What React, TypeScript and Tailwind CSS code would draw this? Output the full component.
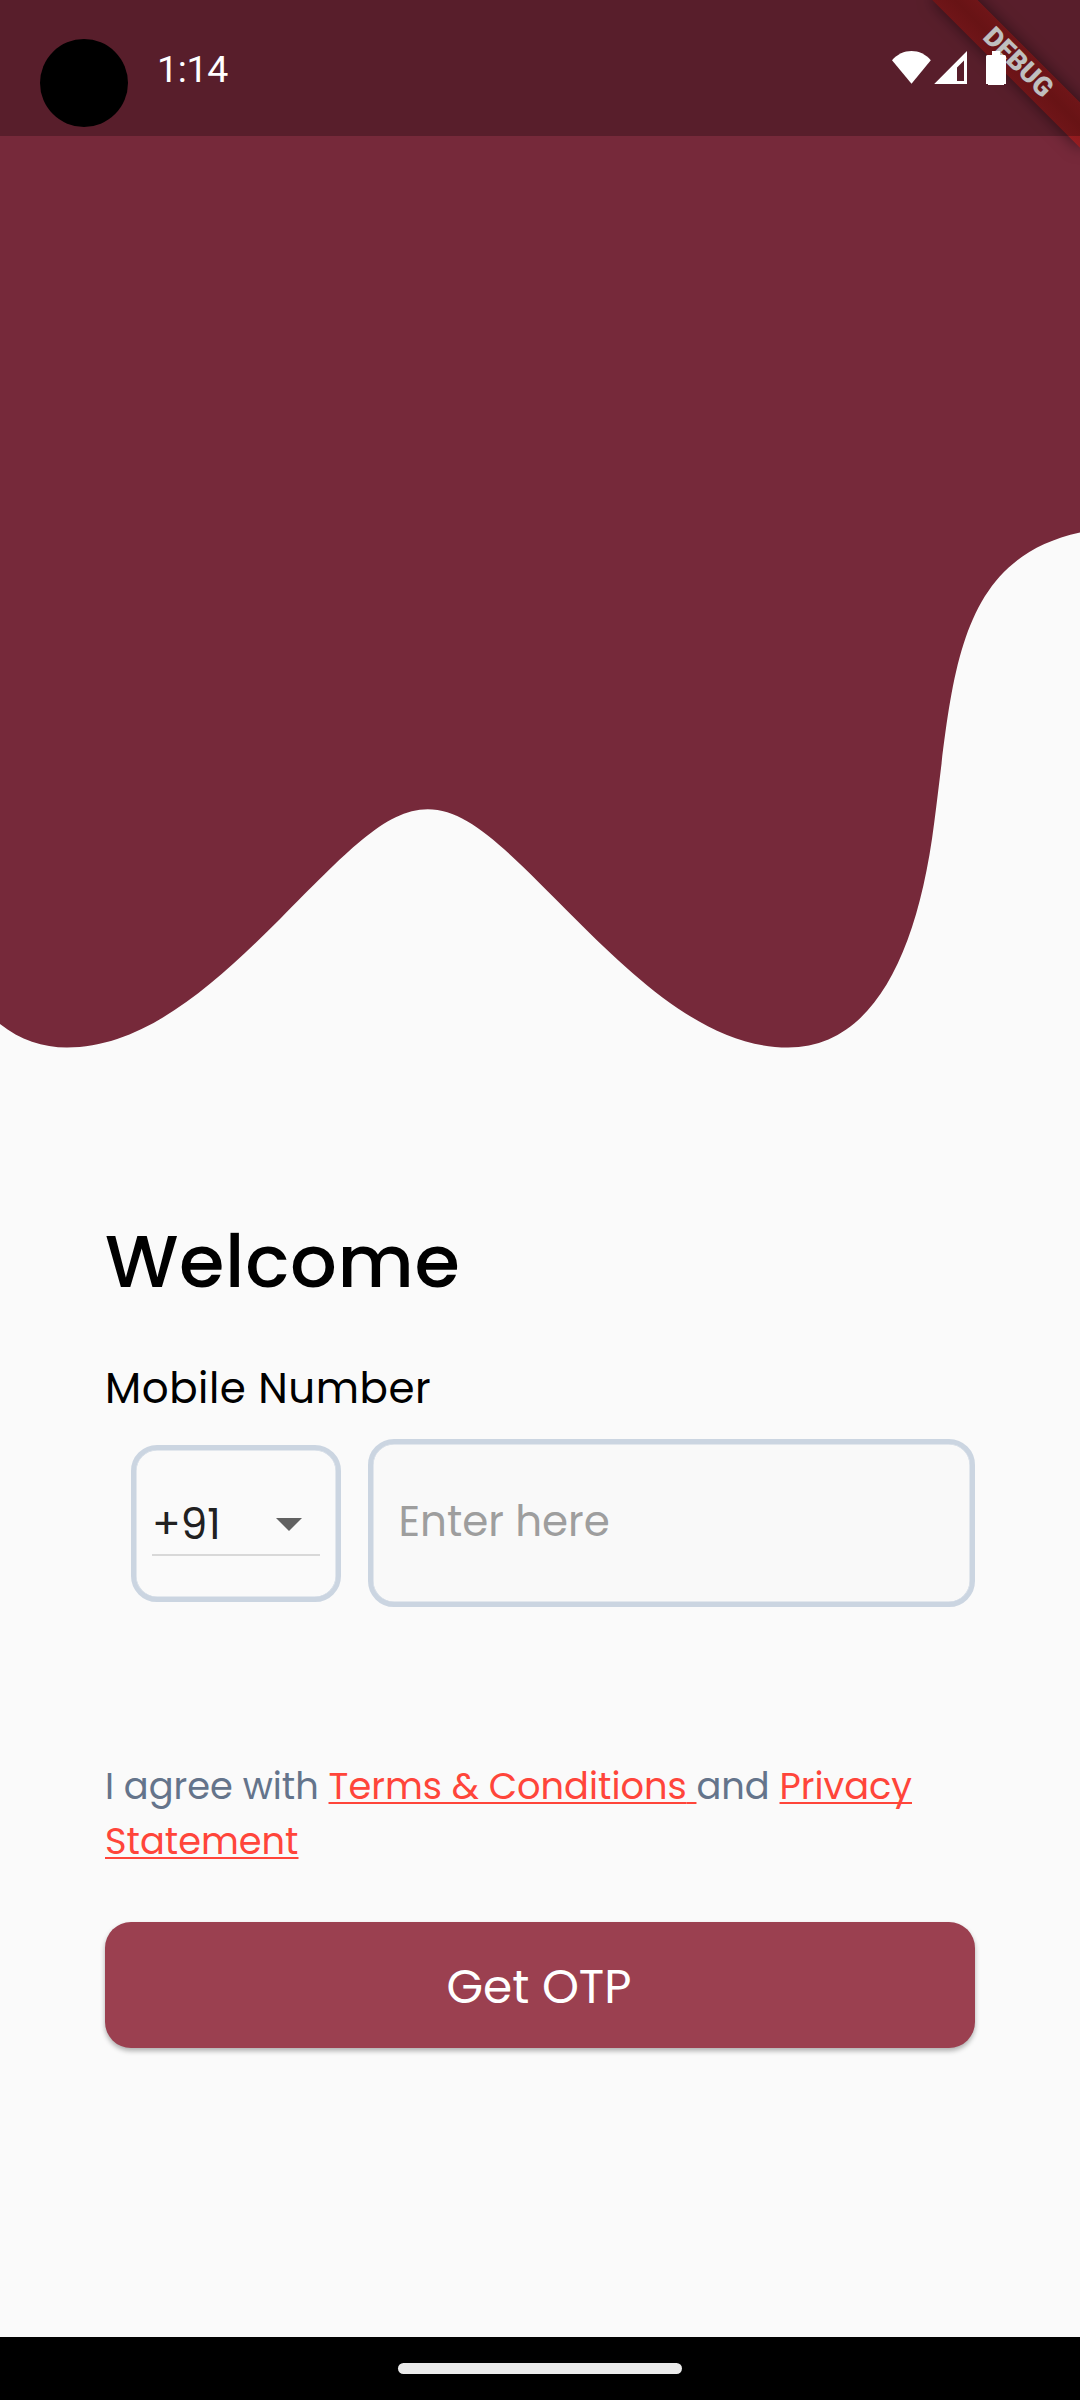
function StatusBar() {
  return (
    <header className="absolute inset-x-0 top-0 flex h-[136px] items-start bg-black/25">
      <div className="mt-[39px] ml-10 size-[88px] rounded-full bg-black" />
      <span className="mt-[46px] ml-[29px] font-['Roboto',sans-serif] text-[37.500px] leading-[47px] tracking-[-0.3px] text-white">
        1:14
      </span>
      <svg className="mt-12 mr-[60px] ml-auto h-10 w-[132px]" viewBox="888 48 132 40" fill="#fff">
        <path d="M911.5 83.7 892 60.2C897.3 54.2 904.2 51 911.5 51s14.200 3.200 19.300 9.200z" />
        <path fillRule="evenodd" d="M934.200 84 967 51V84zM957 67.600V81h7V60.500z" />
        <path d="M992 51h8v4h4.500a1.500 1.500 0 0 1 1.500 1.500V84h-2v1h-16v-1h-2V56.500a1.500 1.500 0 0 1 1.500-1.500h4.500z" />
      </svg>
    </header>
  );
}

function DebugBanner() {
  return (
    <div className="absolute top-[46.500px] left-[912.500px] flex h-[31.500px] w-[210px] rotate-45 items-center justify-center bg-linear-to-b from-[#951c20] via-[#8b1a1d] to-[#951c20] font-['Roboto',sans-serif] text-[26.800px] leading-none font-black text-white shadow-[0_0_16px_rgba(0,0,0,0.5)]">
      DEBUG
    </div>
  );
}

function Hero() {
  return (
    <div className="h-[1048px]">
      <svg className="block h-[1048px] w-[1080px]" viewBox="0 0 1080 1048">
        <path
          fill="#76293a"
          d="M0 0V1024C20 1040 43 1047.500 67 1047.500C145 1047.500 215 984 280 919C345 854 385 809.300 427.700 809.300C470.400 809.300 510.400 854 575.400 919C640.400 984 710 1047.500 788 1047.500C870 1047.500 917 960 934.300 822C953 680 954 560 1080 532.600V0Z"
        />
      </svg>
    </div>
  );
}

function CountryCode() {
  return (
    <div className="mt-[6px] ml-[26px] h-[157px] w-[210px] rounded-[26px] border-[5px] border-[#cbd5e1] px-[16px] shadow-[inset_0_0_0_0.500px_#cbd5e1]">
      <div className="flex h-[106px] items-end border-b-2 border-[#d8d8d8]">
        <span className="-mb-px text-[42px] leading-[60px] text-[#212121]">+91</span>
        <svg className="mr-[18.500px] mb-[23px] ml-auto h-[13px] w-[26px]" viewBox="0 0 26 13">
          <path d="M0 0H26L13 13Z" fill="#616161" />
        </svg>
      </div>
    </div>
  );
}

export default function App() {
  return (
    <div className="relative flex h-[2400px] w-[1080px] flex-col overflow-hidden bg-[#fafafa] font-['Poppins','Inter',sans-serif]">
      <Hero />
      <main className="flex-1 px-[105px]">
        <h1 className="mt-[159px] text-[73.500px] leading-[110px] font-medium tracking-[0.656px] text-black">
          Welcome
        </h1>
        <p className="mt-[42px] text-[42px] leading-[60px] tracking-[0.550px] text-black">Mobile Number</p>
        <div className="mt-[20px] flex h-[168px] items-start">
          <CountryCode />
          <div className="ml-[26.500px] flex h-[168px] flex-1 items-center rounded-[26px] border-[5px] border-[#cbd5e1] bg-[#f9f9f9] pb-[2px] pl-[26px] text-[42px] leading-[60px] text-[#9e9e9e] shadow-[inset_0_0_0_0.500px_#cbd5e1]">
            Enter here
          </div>
        </div>
        <p className="mt-[151.500px] text-[36.750px] leading-[55px] text-[#64748b]">
          I agree with{" "}
          <a className="text-[#ff453a] underline decoration-2 underline-offset-[3px] [text-decoration-skip-ink:none]">
            Terms &amp; Conditions{" "}
          </a>
          and{" "}
          <a className="text-[#ff453a] underline decoration-2 underline-offset-[3px] [text-decoration-skip-ink:none]">
            Privacy Statement
          </a>
        </p>
        <button className="mt-[53.500px] flex h-[126px] w-full items-center justify-center rounded-[26px] bg-[#9b4050] pt-[4px] pr-[2px] text-[47px] text-white shadow-[0_3px_5px_rgba(0,0,0,0.3)]">
          Get OTP
        </button>
      </main>
      <nav className="flex h-[63px] justify-center bg-black pt-[26px]">
        <div className="h-[11px] w-[284px] rounded-full bg-[#ebebeb]" />
      </nav>
      <DebugBanner />
      <StatusBar />
    </div>
  );
}
